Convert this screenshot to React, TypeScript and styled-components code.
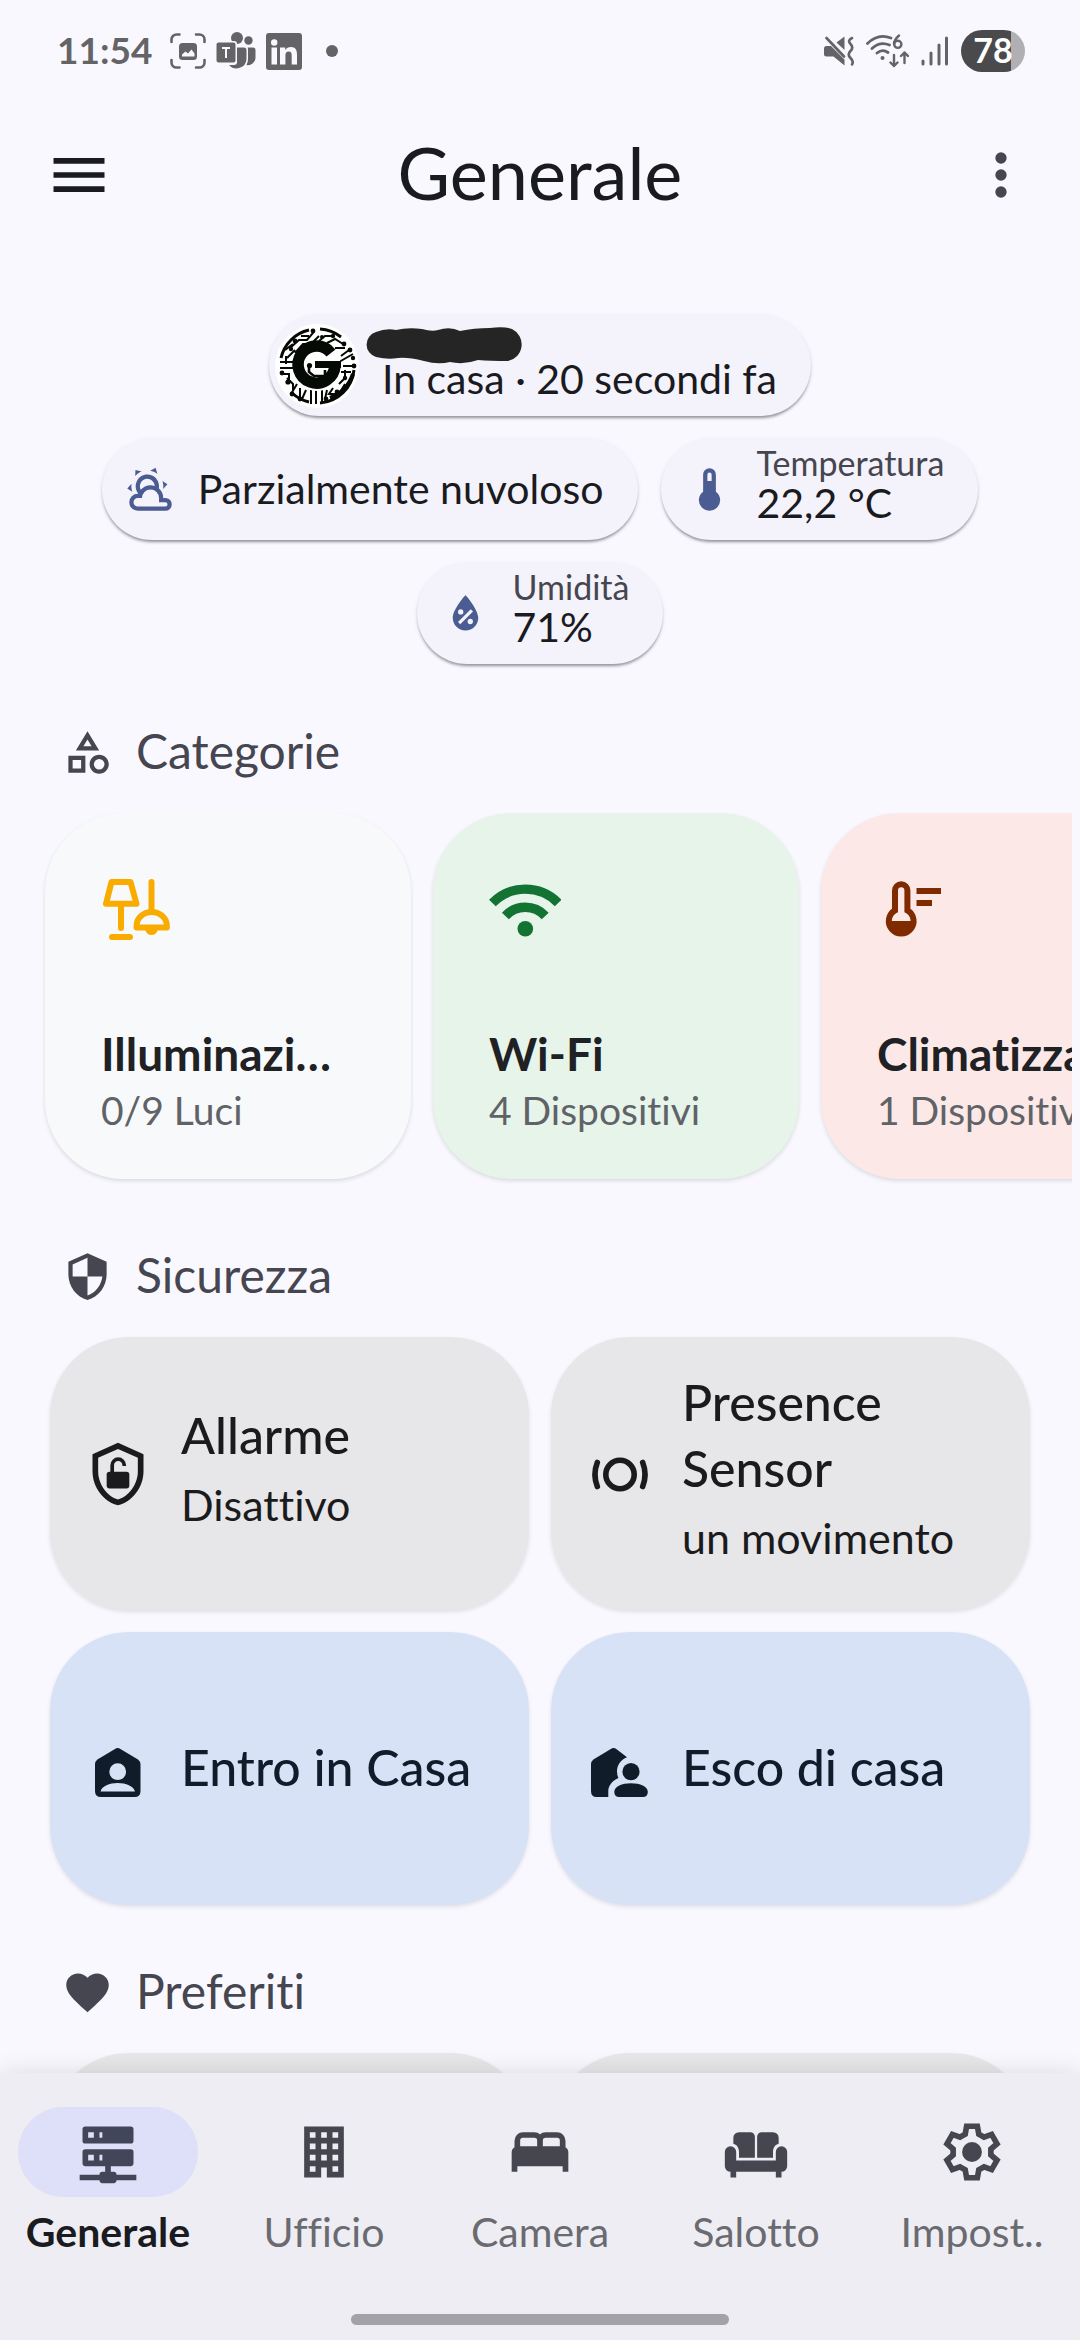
import React from 'react';
import styled, { createGlobalStyle } from 'styled-components';

const GlobalStyle = createGlobalStyle`
  *, *::before, *::after { box-sizing: border-box; }
  body {
    margin: 0;
    background: #faf8ff;
    color: #1a1b21;
    font-family: Lato, "Open Sans", sans-serif;
    font-variant-ligatures: none;
  }
  h1, h2, p { margin: 0; font-weight: 400; }
  button { font: inherit; font-variant-ligatures: none; color: inherit; border: 0; background: none; padding: 0; margin: 0; text-align: left; }
  a { color: inherit; text-decoration: none; }
  svg { display: block; flex: none; }
`;

const Screen = styled.div`
  display: flex;
  flex-direction: column;
  height: 100vh;
  overflow: hidden;
`;

const StatusBar = styled.div`
  display: flex;
  align-items: center;
  justify-content: space-between;
  flex: none;
  height: 102px;
  padding: 0 55px 0 57px;
  color: #646467;
`;

const StatusGroup = styled.div<{ $gap: number }>`
  display: flex;
  align-items: center;
  gap: ${(p) => p.$gap}px;
`;

const Clock = styled.span`
  font-size: 37px;
  line-height: 44px;
  font-weight: 700;
  margin-right: 8px;
  padding-bottom: 2px;
`;

const Dot = styled.span`
  width: 12px;
  height: 12px;
  border-radius: 6px;
  background: #646467;
  margin-left: 14px;
`;

const Battery = styled.span`
  display: grid;
  place-items: center;
  width: 64px;
  height: 42px;
  padding-bottom: 2px;
  border-radius: 21px;
  background: linear-gradient(90deg, #4a4a4c 78%, #b0afb4 78%);
  color: #fff;
  font-size: 34px;
  line-height: 40px;
  font-weight: 700;
`;

const TopBar = styled.header`
  display: grid;
  grid-template-columns: 68px 1fr 68px;
  align-items: center;
  flex: none;
  height: 146px;
  padding: 0 45px;
`;

const IconButton = styled.button<{ $soft?: boolean }>`
  display: grid;
  place-items: center;
  width: 68px;
  height: 68px;
  color: ${(p) => (p.$soft ? '#45464f' : '#1a1b21')};
`;

const Title = styled.h1`
  padding-bottom: 6px;
  text-align: center;
  font-size: 72px;
  line-height: 88px;
`;

const Content = styled.main`
  flex: 1;
  min-height: 0;
  overflow-y: auto;
  scrollbar-width: none;
  padding-top: 67px;
`;

const Badges = styled.div`
  display: flex;
  flex-wrap: wrap;
  justify-content: center;
  gap: 23px;
  padding: 0 90px;
`;

const Badge = styled.button<{ $person?: boolean }>`
  display: flex;
  align-items: center;
  gap: ${(p) => (p.$person ? 23 : 22)}px;
  height: 101px;
  padding: ${(p) => (p.$person ? '0 34px 0 6px' : '0 34px 0 23px')};
  border-radius: 51px;
  background: #f4f2fa;
  color: #4a5c92;
  box-shadow: 0 3px 3px -1px rgba(0, 0, 0, 0.38), 0 1px 5px rgba(0, 0, 0, 0.08);
`;

const BadgeText = styled.span`
  position: relative;
  display: flex;
  flex-direction: column;
`;

const BadgeLabel = styled.span`
  min-height: 28px;
  font-size: 34px;
  line-height: 28px;
  color: #45464f;
`;

const BadgeValue = styled.span`
  padding-bottom: 2px;
  font-size: 41px;
  line-height: 52px;
  color: #1a1b21;
`;

const Scribble = styled.svg`
  position: absolute;
  left: -20px;
  top: 2px;
`;

const Heading = styled.h2<{ $space: number }>`
  display: flex;
  align-items: center;
  gap: 23px;
  height: 51px;
  margin: ${(p) => p.$space}px 62px 35px;
  font-size: 48px;
  line-height: 47px;
  color: #45464f;

  span { padding-bottom: 4px; }
`;

const Carousel = styled.div`
  display: flex;
  gap: 22px;
  margin: 0 8px -12px 0;
  padding: 0 0 12px 45px;
  overflow: hidden;
`;

const CategoryCard = styled.button<{ $bg: string; $accent: string }>`
  display: flex;
  flex-direction: column;
  flex: none;
  width: 366px;
  height: 366px;
  padding: 61px 56px 41px;
  border-radius: 79px;
  background: ${(p) => p.$bg};
  color: ${(p) => p.$accent};
  box-shadow: 0 2px 4px rgba(0, 0, 0, 0.12);
`;

const CategoryName = styled.span`
  margin-top: auto;
  font-size: 46px;
  line-height: 56px;
  font-weight: 700;
  color: #202124;
  white-space: nowrap;
`;

const CategoryInfo = styled.span`
  font-size: 39px;
  line-height: 56px;
  color: #5f6368;
  white-space: nowrap;
`;

const Tiles = styled.div`
  display: grid;
  grid-template-columns: 1fr 1fr;
  gap: 22px;
  padding: 0 50px;
`;

const Tile = styled.button<{ $blue?: boolean }>`
  display: flex;
  align-items: center;
  gap: 29px;
  height: 273px;
  padding: 0 34px;
  border-radius: 79px;
  background: ${(p) => (p.$blue ? '#d8e2f6' : '#e7e7e9')};
  color: ${(p) => (p.$blue ? '#111c2b' : '#1b1b1d')};
  box-shadow: 0 2px 4px rgba(0, 0, 0, 0.1);
`;

const TileText = styled.span`
  display: flex;
  flex-direction: column;
  min-width: 0;
`;

const TileName = styled.span`
  max-width: 310px;
  padding-bottom: 4px;
  font-size: 50px;
  line-height: 66px;
  font-weight: 500;
`;

const TileState = styled.span`
  padding-bottom: 8px;
  font-size: 43px;
  line-height: 66px;
`;

const BottomBar = styled.nav`
  position: relative;
  flex: none;
  padding: 34px 0 15px;
  background: #eeedf3;
  box-shadow: 0 0 24px rgba(0, 0, 0, 0.12);
`;

const Tabs = styled.div`
  display: grid;
  grid-template-columns: repeat(5, 1fr);
`;

const Tab = styled.a<{ $active?: boolean }>`
  display: flex;
  flex-direction: column;
  align-items: center;
  gap: 9px;
  font-size: 41px;
  line-height: 52px;
  font-weight: ${(p) => (p.$active ? 700 : 400)};
  color: ${(p) => (p.$active ? '#1a1b21' : '#6a6a71')};
`;

const TabIcon = styled.span<{ $active?: boolean }>`
  display: grid;
  place-items: center;
  width: 180px;
  height: 90px;
  border-radius: 45px;
  background: ${(p) => (p.$active ? '#dee0f9' : 'transparent')};
  color: ${(p) => (p.$active ? '#424659' : '#45464f')};
`;

const HomeBar = styled.div`
  width: 35%;
  height: 11px;
  margin: 56px auto 0;
  border-radius: 6px;
  background: #a3a2a7;
`;

function Icon({ d, size = 68, children }: { d?: string; size?: number; children?: React.ReactNode }) {
  return (
    <svg width={size} height={size} viewBox="0 0 24 24" fill="currentColor" fillRule="evenodd" aria-hidden="true">
      {d && <path d={d} />}
      {children}
    </svg>
  );
}

const MENU = 'M3,6H21V8H3V6M3,11H21V13H3V11M3,16H21V18H3V16Z';
const DOTS = 'M12,16A2,2 0 0,1 14,18A2,2 0 0,1 12,20A2,2 0 0,1 10,18A2,2 0 0,1 12,16M12,10A2,2 0 0,1 14,12A2,2 0 0,1 12,14A2,2 0 0,1 10,12A2,2 0 0,1 12,10M12,4A2,2 0 0,1 14,6A2,2 0 0,1 12,8A2,2 0 0,1 10,6A2,2 0 0,1 12,4Z';
const PARTLY_CLOUDY = 'M12.74,5.47C15.1,6.5 16.35,9.03 15.92,11.46C17.19,12.56 18,14.19 18,16V16.17C18.31,16.06 18.65,16 19,16A3,3 0 0,1 22,19A3,3 0 0,1 19,22H6A4,4 0 0,1 2,18A4,4 0 0,1 6,14H6.27C5,12.45 4.6,10.24 5.5,8.26C6.72,5.5 9.97,4.24 12.74,5.47M11.93,7.3C10.16,6.5 8.09,7.31 7.31,9.07C6.85,10.09 6.93,11.22 7.41,12.13C8.5,10.83 10.16,10 12,10C12.7,10 13.38,10.12 14,10.34C13.94,9.06 13.18,7.86 11.93,7.3M13.55,3.64C13,3.4 12.45,3.23 11.88,3.12L14.37,1.82L15.27,4.71C14.76,4.29 14.19,3.93 13.55,3.64M6.09,4.44C5.6,4.79 5.17,5.19 4.8,5.63L4.91,2.82L7.87,3.5C7.25,3.71 6.65,4.03 6.09,4.44M18,9.71C17.91,9.12 17.78,8.55 17.59,8L19.97,9.5L17.92,11.73C18.03,11.08 18.05,10.4 18,9.71M3.04,11.3C3.11,11.9 3.24,12.47 3.43,13L1.06,11.5L3.1,9.28C3,9.93 2.97,10.61 3.04,11.3M19,18H16V16A4,4 0 0,0 12,12A4,4 0 0,0 8,16H6A2,2 0 0,0 4,18A2,2 0 0,0 6,20H19A1,1 0 0,0 20,19A1,1 0 0,0 19,18Z';
const THERMOMETER = 'M15 13V5A3 3 0 0 0 9 5V13A5 5 0 1 0 15 13M12 4A1 1 0 0 1 13 5V8H11V5A1 1 0 0 1 12 4Z';
const HUMIDITY = 'M12,3.25C12,3.25 6,10 6,14C6,17.32 8.69,20 12,20A6,6 0 0,0 18,14C18,10 12,3.25 12,3.25M14.47,9.97L15.53,11.03L9.53,17.03L8.47,15.97M9.75,10A1.25,1.25 0 0,1 11,11.25A1.25,1.25 0 0,1 9.75,12.5A1.25,1.25 0 0,1 8.5,11.25A1.25,1.25 0 0,1 9.75,10M14.25,14.5A1.25,1.25 0 0,1 15.5,15.75A1.25,1.25 0 0,1 14.25,17A1.25,1.25 0 0,1 13,15.75A1.25,1.25 0 0,1 14.25,14.5Z';
const SHAPES = 'M11,13.5V21.5H3V13.5H11M9,15.5H5V19.5H9V15.5M12,2L17.5,11H6.5L12,2M12,5.86L10.08,9H13.92L12,5.86M17.5,13C20,13 22,15 22,17.5C22,20 20,22 17.5,22C15,22 13,20 13,17.5C13,15 15,13 17.5,13M17.5,15A2.5,2.5 0 0,0 15,17.5A2.5,2.5 0 0,0 17.5,20A2.5,2.5 0 0,0 20,17.5A2.5,2.5 0 0,0 17.5,15Z';
const SECURITY = 'M12,12H19C18.47,16.11 15.72,19.78 12,20.92V12H5V6.3L12,3.19M12,1L3,5V11C3,16.55 6.84,21.73 12,23C17.16,21.73 21,16.55 21,11V5L12,1Z';
const HEART = 'M12,21.35L10.55,20.03C5.4,15.36 2,12.27 2,8.5C2,5.41 4.42,3 7.5,3C9.24,3 10.91,3.81 12,5.08C13.09,3.81 14.76,3 16.5,3C19.58,3 22,5.41 22,8.5C22,12.27 18.6,15.36 13.45,20.03L12,21.35Z';
const SHIELD = 'M21,11C21,16.55 17.16,21.74 12,23C6.84,21.74 3,16.55 3,11V5L12,1L21,5V11M12,21C15.75,20 19,15.54 19,11.22V6.3L12,3.18L5,6.3V11.22C5,15.54 8.25,20 12,21';
const SERVER = 'M13,19H14A1,1 0 0,1 15,20H22V22H15A1,1 0 0,1 14,23H10A1,1 0 0,1 9,22H2V20H9A1,1 0 0,1 10,19H11V17H4A1,1 0 0,1 3,16V12A1,1 0 0,1 4,11H20A1,1 0 0,1 21,12V16A1,1 0 0,1 20,17H13V19M4,3H20A1,1 0 0,1 21,4V8A1,1 0 0,1 20,9H4A1,1 0 0,1 3,8V4A1,1 0 0,1 4,3M9,7H10V5H9V7M9,15H10V13H9V15M5,5V7H7V5H5M5,13V15H7V13H5Z';
const OFFICE = 'M5,3V21H11V17.5H13V21H19V3H5M7,5H9V7H7V5M11,5H13V7H11V5M15,5H17V7H15V5M7,9H9V11H7V9M11,9H13V11H11V9M15,9H17V11H15V9M7,13H9V15H7V13M11,13H13V15H11V13M15,13H17V15H15V13M7,17H9V19H7V17M15,17H17V19H15V17Z';
const BED = 'M3 10.3V8A3 3 0 0 1 6 5H10C10.8 5 11.5 5.3 12 5.8C12.5 5.3 13.2 5 14 5H18A3 3 0 0 1 21 8V10.3C21.6 10.7 22 11.3 22 12V19H20V17H4V19H2V12C2 11.3 2.4 10.7 3 10.3ZM5 10H11V8A1 1 0 0 0 10 7H6A1 1 0 0 0 5 8ZM13 10H19V8A1 1 0 0 0 18 7H14A1 1 0 0 0 13 8Z';
const SOFA = 'M4 7A2 2 0 0 1 6 5H10A1.6 1.6 0 0 1 11.6 6.6V14H6V12C6 10.5 5.2 9.4 4 9.1ZM20 7A2 2 0 0 0 18 5H14A1.6 1.6 0 0 0 12.4 6.6V14H18V12C18 10.5 18.8 9.4 20 9.1ZM1 12A2 2 0 0 1 5 12V15H19V12A2 2 0 0 1 23 12V17A2 2 0 0 1 21 19V21H19V19H5V21H3V19A2 2 0 0 1 1 17Z';

const GEAR_TOOTH = [[-2.4, -6.3], [-1.9, -9.1], [1.9, -9.1], [2.4, -6.3]];
const GEAR = Array.from({ length: 6 }, (_, k) => (k * Math.PI) / 3)
  .flatMap((a) =>
    GEAR_TOOTH.map(([x, y]) =>
      [12 + x * Math.cos(a) - y * Math.sin(a), 12 + x * Math.sin(a) + y * Math.cos(a)].map((n) => n.toFixed(2)).join(',')
    )
  )
  .join(' ');

const Gear = () => (
  <Icon>
    <polygon points={GEAR} fill="none" stroke="currentColor" strokeWidth="2" />
    <circle cx="12" cy="12" r="3.5" />
  </Icon>
);

const ShieldLock = () => (
  <Icon d={SHIELD}>
    <rect x="8" y="11.2" width="8" height="5.9" rx="1" />
    <path d="M9.95 12V8.9a2.1 2.1 0 0 1 4.25 0v.3" fill="none" stroke="currentColor" strokeWidth="1.3" />
  </Icon>
);

const Presence = () => (
  <svg width="68" height="68" viewBox="0 0 68 68" fill="none" stroke="currentColor" strokeWidth="5.6" strokeLinecap="round" aria-hidden="true">
    <circle cx="35" cy="34.5" r="14.2" />
    <path d="M12.3 22.5Q7.6 34.5 12.3 46.5M57.7 22.5Q62.4 34.5 57.7 46.5" />
  </svg>
);

const HomePerson = () => (
  <svg width="68" height="68" viewBox="0 0 68 68" fill="currentColor" fillRule="evenodd" aria-hidden="true">
    <path d="M11 29.5Q11 26.5 13.4 24.6L31 14Q33.7 12 36.4 14L54 24.6Q56.5 26.5 56.5 29.5V56Q56.5 62 50.5 62H17Q11 62 11 56ZM33.7 28.3A8.4 8.4 0 1 0 33.7 45.1A8.4 8.4 0 1 0 33.7 28.3ZM16.5 56.5H51C49.5 51 42 48 33.7 48S18 51 16.5 56.5Z" />
  </svg>
);

const HomeLeave = () => (
  <svg width="68" height="68" viewBox="0 0 68 68" fill="currentColor" aria-hidden="true">
    <path d="M6 29.5Q6 26.5 8.4 24.6L25.8 14Q28.6 12 31.3 14L42 22.3C36 24.5 32 30 32 36.5Q32 40 33.4 43C27 46 23.3 51 23.3 56V62H11.6Q6 62 6 56Z" />
    <circle cx="46" cy="36.7" r="8.6" />
    <path d="M29.3 57C29.3 51 37 48.2 46 48.2S62.8 51 62.8 57Q62.8 62 57.8 62H34.3Q29.3 62 29.3 57Z" />
  </svg>
);

const Lamps = () => (
  <svg width="72" height="72" viewBox="0 0 72 72" fill="none" stroke="currentColor" strokeWidth="6" strokeLinecap="round" strokeLinejoin="round" aria-hidden="true">
    <path d="M10.5 8H29.5L35.5 29.8H5ZM20 31V54M11 63H29M50.5 8V37M35.6 53.6V51.5A15.1 13.5 0 0 1 65.8 51.5V53.6Z" />
    <path d="M47.5 56A3.2 3.2 0 0 0 53.5 56Z" />
  </svg>
);

const Wifi = () => (
  <svg width="72" height="72" viewBox="0 0 72 72" fill="none" stroke="currentColor" strokeWidth="9.4" aria-hidden="true">
    <path d="M3.4 29A46 46 0 0 1 69.2 29M16.4 42A27 27 0 0 1 56.2 42" />
    <circle cx="36.3" cy="54.8" r="7.8" fill="currentColor" stroke="none" />
  </svg>
);

const Climate = () => (
  <svg width="72" height="72" viewBox="0 0 72 72" fill="none" stroke="currentColor" strokeWidth="6" aria-hidden="true">
    <path d="M18 36.4V16.5A6.2 6.2 0 0 1 30.4 16.5V36.4A12.4 12.4 0 1 1 18 36.4ZM39.5 17H64M39.5 29H55" />
    <path d="M11.8 47H36.6A12.4 12.4 0 0 1 11.8 47Z" fill="currentColor" stroke="none" />
  </svg>
);

const Avatar = () => (
  <svg width="84" height="84" viewBox="0 0 84 84" fill="none" stroke="#050a05" aria-hidden="true">
    <circle cx="42" cy="42" r="42" fill="#fff" stroke="none" />
    <path d="M6 34A37 37 0 0 1 34 6M45 5A37 37 0 0 1 66 13M79 46A37 37 0 0 1 45 79M34 78A37 37 0 0 1 17 69" strokeWidth="3" />
    <path d="M78 50C74 62 66 70 55 74" strokeWidth="4" />
    <g strokeWidth="2">
      <path d="M5 38H20M5 44H20M11 32V40M8 50H14V58M20 26L12 34M15 24L24 16H32L38 9V5M20 29L28 20H36L44 12M44 17L50 12H58M52 19L60 15L68 20M60 24L70 24M66 32L74 26M64 38L78 30M68 42H79M70 46V54L64 60M12 54L18 60V66M22 60L16 70M25 64V74M31 66L27 75M36 66V80M41 66V80M47 66V79M52 66L50 75M58 64L54 70H64L70 60M62 68L70 68M10 26L18 20M26 12L34 12M66 48H76" />
    </g>
    <g fill="#050a05" stroke="none">
      <circle cx="20" cy="17" r="2.4" /><circle cx="38" cy="7" r="2.4" /><circle cx="16" cy="25" r="2.2" />
      <circle cx="58" cy="12" r="2.2" /><circle cx="69" cy="20" r="2.4" /><circle cx="75" cy="26" r="2.4" />
      <circle cx="78" cy="34" r="2.2" /><circle cx="79" cy="42" r="2.4" /><circle cx="7" cy="49" r="2.4" />
      <circle cx="13" cy="58" r="2.6" /><circle cx="17" cy="70" r="2.4" /><circle cx="25" cy="75" r="2.4" />
      <circle cx="51" cy="75" r="2.4" /><circle cx="62" cy="68" r="2.4" /><circle cx="70" cy="54" r="2.2" />
      <circle cx="47" cy="13" r="2" />
    </g>
    <circle cx="42" cy="43" r="24" fill="#fff" stroke="none" />
    <path d="M56 29A18.500 18.500 0 1 0 60 42" strokeWidth="11.500" />
    <path d="M40 37H66V44H40Z" fill="#050a05" stroke="none" />
    <path d="M34 42V48L39 52H50V46" strokeWidth="2.6" />
    <circle cx="34.5" cy="41.5" r="2.6" fill="#050a05" stroke="none" />
  </svg>
);

const Capture = () => (
  <svg width="36" height="36" viewBox="0 0 36 36" fill="none" stroke="currentColor" strokeWidth="2.6" strokeLinecap="round" aria-hidden="true">
    <path d="M1.5 9V6.5A5 5 0 0 1 6.5 1.5H9.5M26 1.5H29.5A5 5 0 0 1 34.5 6.5V9M34.5 27V29.5A5 5 0 0 1 29.5 34.5H26M9.5 34.5H6.5A5 5 0 0 1 1.5 29.5V27" />
    <rect x="9" y="10" width="18" height="17" rx="3.5" fill="currentColor" stroke="none" />
    <path d="M12 23.5V21.5L15.5 18.5L18 20.5L21.5 16.5L24.5 20.5V23.5Z" fill="#faf8ff" stroke="none" />
  </svg>
);

const Teams = () => (
  <svg width="40" height="38" viewBox="0 0 40 38" fill="currentColor" aria-hidden="true">
    <circle cx="21" cy="6" r="6" />
    <circle cx="32.5" cy="8.5" r="4.2" />
    <path d="M31.600 15.5H37Q39.5 15.5 39.5 18V26A7.5 7.5 0 0 1 30.5 33Q32 30 32 27V17Q32 16 31.600 15.5Z" />
    <path d="M20 15.5H28Q30.5 15.5 30.5 18V27A10 10 0 0 1 13 33H18Q21 33 21 30Z" />
    <rect x="-1" y="9" width="22" height="23" rx="3" fill="#faf8ff" />
    <rect x="0.5" y="10.5" width="19" height="20" rx="2" />
    <path d="M6 16H14M10 16V26" stroke="#faf8ff" strokeWidth="2" />
  </svg>
);

const LinkedIn = () => (
  <svg width="36" height="37" viewBox="0 0 36 37" aria-hidden="true">
    <rect width="36" height="37" rx="3" fill="currentColor" />
    <g fill="#faf8ff">
      <circle cx="8.2" cy="9.5" r="3.2" />
      <path d="M5.5 14.5H11V31.5H5.5ZM14 14.5H19.2V17C20.5 15 22.5 14 25 14C29.5 14 31 17 31 21.5V31.5H25.7V22.5C25.7 20 25 18.5 22.8 18.5C20.4 18.5 19.4 20 19.4 22.5V31.5H14Z" />
    </g>
  </svg>
);

const Muted = () => (
  <svg width="30" height="30" viewBox="0 0 30 30" fill="currentColor" aria-hidden="true">
    <path d="M2.5 10H7L20.5 23.5V29.5L9.5 20.5H2.5Q0 20.5 0 18V12.5Q0 10 2.5 10ZM12.5 6.5L20.5 0.5V14Z" />
    <path d="M2.5 2L20 20.5M28 2Q23 4.5 26.5 8T26.5 15T26.5 22T28 28.5" fill="none" stroke="currentColor" strokeWidth="2.6" strokeLinecap="round" />
  </svg>
);

const StatusWifi = () => (
  <svg width="43" height="34" viewBox="0 0 43 34" fill="none" stroke="currentColor" strokeWidth="2.8" strokeLinecap="round" strokeLinejoin="round" aria-hidden="true">
    <path d="M1.5 9.5Q12 -1 25 4M6 14.5Q14 7 23.5 11M11 19Q16.5 14.5 22 18.5" />
    <circle cx="16.5" cy="24" r="2" fill="currentColor" stroke="none" />
    <path d="M33 1.5Q28 6 28 10" strokeWidth="2.4" />
    <circle cx="31.8" cy="10.3" r="3.6" strokeWidth="2.4" />
    <path d="M28 21V32M24.5 28.5L28 32L31.5 28.5M38.5 29V18.5M35 22L38.5 18.5L42 22" strokeWidth="2.4" />
  </svg>
);

const Signal = () => (
  <svg width="28" height="30" viewBox="0 0 28 30" stroke="currentColor" strokeWidth="3" strokeLinecap="round" aria-hidden="true">
    <path d="M2 25V28M10 17V28M18 9V28M25.5 2V28" />
  </svg>
);

export default function App() {
  return (
    <Screen>
      <GlobalStyle />
      <StatusBar>
        <StatusGroup $gap={10}>
          <Clock>11:54</Clock>
          <Capture />
          <Teams />
          <LinkedIn />
          <Dot />
        </StatusGroup>
        <StatusGroup $gap={12}>
          <Muted />
          <StatusWifi />
          <Signal />
          <Battery>78</Battery>
        </StatusGroup>
      </StatusBar>

      <TopBar>
        <IconButton aria-label="Menu"><Icon d={MENU} /></IconButton>
        <Title>Generale</Title>
        <IconButton $soft aria-label="Altro"><Icon d={DOTS} /></IconButton>
      </TopBar>

      <Content>
        <Badges>
          <Badge $person>
            <Avatar />
            <BadgeText>
              <Scribble width="160" height="37" viewBox="0 0 160 37" aria-hidden="true">
                <path d="M14 5Q24 1 34 3Q46 0 60 2Q70 5 76 3Q88 -1 98 4Q112 1 128 1Q142 -1 150 2A17 17 0 0 1 146 34Q128 34 116 33Q102 38 88 35Q76 38 62 34Q46 30 36 31Q26 33 14 30A13 13 0 0 1 14 5Z" fill="#252525" />
              </Scribble>
              <BadgeLabel />
              <BadgeValue>In casa · 20 secondi fa</BadgeValue>
            </BadgeText>
          </Badge>
          <Badge>
            <Icon size={51} d={PARTLY_CLOUDY} />
            <BadgeValue>Parzialmente nuvoloso</BadgeValue>
          </Badge>
          <Badge>
            <Icon size={51} d={THERMOMETER} />
            <BadgeText>
              <BadgeLabel>Temperatura</BadgeLabel>
              <BadgeValue>22,2 °C</BadgeValue>
            </BadgeText>
          </Badge>
          <Badge>
            <Icon size={51} d={HUMIDITY} />
            <BadgeText>
              <BadgeLabel>Umidità</BadgeLabel>
              <BadgeValue>71%</BadgeValue>
            </BadgeText>
          </Badge>
        </Badges>

        <Heading $space={63}><Icon size={51} d={SHAPES} /><span>Categorie</span></Heading>
        <Carousel>
          <CategoryCard $bg="#f8f9fb" $accent="#f9ab00">
            <Lamps />
            <CategoryName>Illuminazi…</CategoryName>
            <CategoryInfo>0/9 Luci</CategoryInfo>
          </CategoryCard>
          <CategoryCard $bg="#e6f4ea" $accent="#137333">
            <Wifi />
            <CategoryName>Wi-Fi</CategoryName>
            <CategoryInfo>4 Dispositivi</CategoryInfo>
          </CategoryCard>
          <CategoryCard $bg="#fce8e6" $accent="#802a00">
            <Climate />
            <CategoryName>Climatizza…</CategoryName>
            <CategoryInfo>1 Dispositivo</CategoryInfo>
          </CategoryCard>
        </Carousel>

        <Heading $space={72}><Icon size={51} d={SECURITY} /><span>Sicurezza</span></Heading>
        <Tiles>
          <Tile>
            <ShieldLock />
            <TileText>
              <TileName>Allarme</TileName>
              <TileState>Disattivo</TileState>
            </TileText>
          </Tile>
          <Tile>
            <Presence />
            <TileText>
              <TileName>Presence Sensor</TileName>
              <TileState>un movimento</TileState>
            </TileText>
          </Tile>
          <Tile $blue>
            <HomePerson />
            <TileName>Entro in Casa</TileName>
          </Tile>
          <Tile $blue>
            <HomeLeave />
            <TileName>Esco di casa</TileName>
          </Tile>
        </Tiles>

        <Heading $space={62}><Icon size={51} d={HEART} /><span>Preferiti</span></Heading>
        <Tiles>
          <Tile aria-label="Preferito 1" />
          <Tile aria-label="Preferito 2" />
        </Tiles>
      </Content>

      <BottomBar>
        <Tabs>
          <Tab href="#generale" $active><TabIcon $active><Icon d={SERVER} /></TabIcon>Generale</Tab>
          <Tab href="#ufficio"><TabIcon><Icon d={OFFICE} /></TabIcon>Ufficio</Tab>
          <Tab href="#camera"><TabIcon><Icon d={BED} /></TabIcon>Camera</Tab>
          <Tab href="#salotto"><TabIcon><Icon d={SOFA} /></TabIcon>Salotto</Tab>
          <Tab href="#impostazioni"><TabIcon><Gear /></TabIcon>Impost..</Tab>
        </Tabs>
        <HomeBar />
      </BottomBar>
    </Screen>
  );
}
